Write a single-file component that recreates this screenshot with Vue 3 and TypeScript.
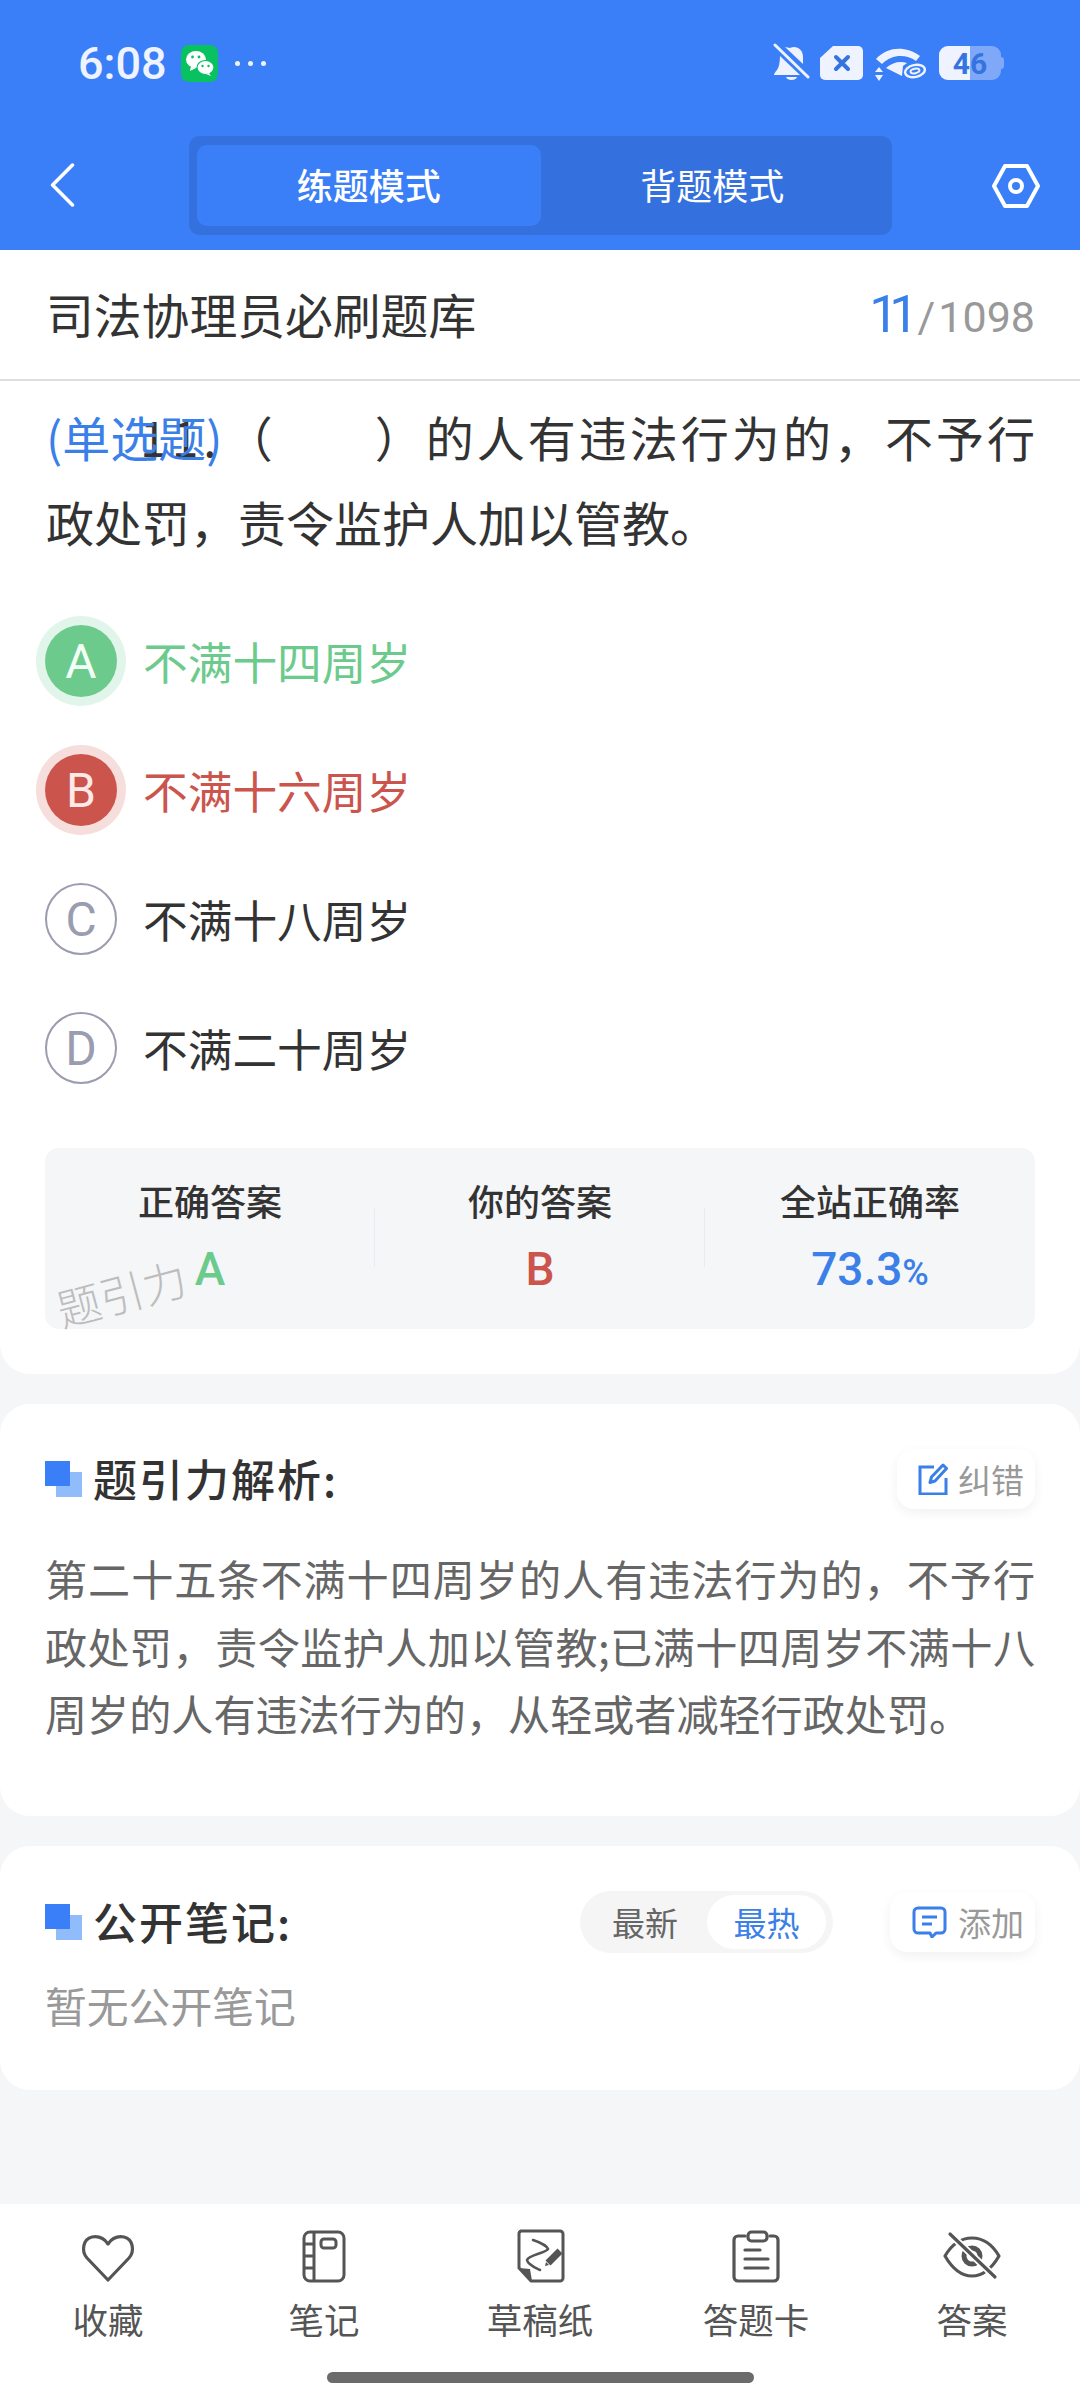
<script setup lang="ts">
interface Option {
  key: string;
  text: string;
  state: 'right' | 'wrong' | 'none';
}

interface Stat {
  label: string;
  value: string;
  unit?: string;
  tone: string;
}

const options: Option[] = [
  { key: 'A', text: '不满十四周岁', state: 'right' },
  { key: 'B', text: '不满十六周岁', state: 'wrong' },
  { key: 'C', text: '不满十八周岁', state: 'none' },
  { key: 'D', text: '不满二十周岁', state: 'none' },
];

const stats: Stat[] = [
  { label: '正确答案', value: 'A', tone: 'right' },
  { label: '你的答案', value: 'B', tone: 'wrong' },
  { label: '全站正确率', value: '73.3', unit: '%', tone: 'blue' },
];

const tabs = ['收藏', '笔记', '草稿纸', '答题卡', '答案'];
</script>

<template>
  <div class="page">
    <header class="head">
      <div class="status">
        <span class="status__time">6:08</span>
        <svg class="status__wechat" viewBox="0 0 37 37" aria-hidden="true">
          <rect width="37" height="37" rx="8" fill="#08c160" />
          <ellipse cx="15" cy="14.500" rx="10" ry="8.500" fill="#fff" />
          <path d="M10 21l-1 5 6-3z" fill="#fff" />
          <ellipse cx="24.500" cy="22.500" rx="8.500" ry="7" fill="#fff" stroke="#08c160" stroke-width="1.200" />
          <path d="M28 28l2 3-5-2z" fill="#fff" />
          <circle cx="11.500" cy="12" r="1.400" fill="#08c160" />
          <circle cx="18" cy="12" r="1.400" fill="#08c160" />
          <circle cx="21.500" cy="21" r="1.200" fill="#08c160" />
          <circle cx="27.500" cy="21" r="1.200" fill="#08c160" />
        </svg>
        <span class="status__dots"><i></i><i></i><i></i></span>
        <span class="status__right">
          <svg class="status__bell" viewBox="0 0 37 40" aria-hidden="true">
            <path d="M17 5c6-3 13 1 13 9v7l-18-17zM7 13l20 19H1c0-1 1-3 3-5 2-3 3-8 3-14z" fill="#eef3ff" />
            <path d="M13 34h11c-1 4-10 4-11 0z" fill="#eef3ff" />
            <path d="M2 2l33 32" stroke="#eef3ff" stroke-width="3" stroke-linecap="round" />
          </svg>
          <svg class="status__sim" viewBox="0 0 43 34" aria-hidden="true">
            <path d="M13 0h25a5 5 0 0 1 5 5v24a5 5 0 0 1-5 5H5a5 5 0 0 1-5-5V12z" fill="#eef3ff" />
            <path d="M16 11l12 12M28 11L16 23" stroke="#3473e0" stroke-width="4" stroke-linecap="round" />
          </svg>
          <svg class="status__wifi" viewBox="0 0 52 36" aria-hidden="true">
            <path d="M2 14C14 1 32 1 46 11l-4 5C32 9 18 9 8 19z" fill="#eef3ff" />
            <path d="M12 23c7-6 14-7 21-5l-4 3-1 10z" fill="#eef3ff" />
            <path d="M5 22l4 5H1zM5 36l4-6H1z" fill="#eef3ff" />
            <ellipse cx="41" cy="26" rx="10" ry="6" fill="none" stroke="#eef3ff" stroke-width="2.400" transform="rotate(-12 41 26)" />
            <ellipse cx="41" cy="26" rx="4.500" ry="2.200" fill="none" stroke="#eef3ff" stroke-width="2" transform="rotate(-12 41 26)" />
          </svg>
          <span class="status__battery">
            <span class="status__level"></span>
            <b>46</b>
          </span>
        </span>
      </div>
      <div class="nav">
        <svg class="nav__back" viewBox="0 0 24 42" aria-hidden="true">
          <path d="M22 2L3 21l19 19" fill="none" stroke="#fff" stroke-width="3.400" stroke-linecap="round" stroke-linejoin="round" />
        </svg>
        <div class="mode">
          <span class="mode__item mode__item--on">练题模式</span>
          <span class="mode__item">背题模式</span>
        </div>
        <svg class="nav__gear" viewBox="0 0 48 44" aria-hidden="true">
          <path d="M13 2h22l11 20-11 20H13L2 22z" fill="none" stroke="#fff" stroke-width="4" stroke-linejoin="round" />
          <circle cx="24" cy="22" r="6" fill="none" stroke="#fff" stroke-width="4" />
        </svg>
      </div>
    </header>

    <main class="body">
      <section class="card card--question">
        <div class="title">
          <span class="title__name">司法协理员必刷题库</span>
          <span class="title__count"><em>11</em><i>/</i>1098</span>
        </div>
        <div class="question">
          <span class="question__type">(单选题)</span>
          <p class="question__text"><span class="question__num">11.</span>（&emsp;&emsp;）的人有违法行为的，不予行政处罚，责令监护人加以管教。</p>
        </div>
        <ul class="options">
          <li v-for="opt in options" :key="opt.key" class="option" :class="`option--${opt.state}`">
            <span class="option__key">{{ opt.key }}</span>
            <span class="option__text">{{ opt.text }}</span>
          </li>
        </ul>
        <div class="stats">
          <div v-for="item in stats" :key="item.label" class="stat">
            <span class="stat__label">{{ item.label }}</span>
            <span class="stat__value" :class="`stat__value--${item.tone}`">{{ item.value }}<small v-if="item.unit">{{ item.unit }}</small></span>
          </div>
          <span class="stats__mark">题引力</span>
        </div>
      </section>

      <section class="card card--analysis">
        <div class="section-head">
          <span class="squares"></span>
          <h2 class="section-head__title">题引力解析:</h2>
          <button type="button" class="chip">
            <svg class="chip__icon" viewBox="0 0 30 32" aria-hidden="true">
              <path d="M16 4H2v27h26V15" fill="none" stroke="#3b7fe8" stroke-width="3" />
              <path d="M25 2l3.500 3.500L17 18l-5 1.500L13.500 14z" fill="none" stroke="#3b7fe8" stroke-width="3" stroke-linejoin="round" />
            </svg>
            <span>纠错</span>
          </button>
        </div>
        <p class="analysis">第二十五条不满十四周岁的人有违法行为的，不予行政处罚，责令监护人加以管教;已满十四周岁不满十八周岁的人有违法行为的，从轻或者减轻行政处罚。</p>
      </section>

      <section class="card card--notes">
        <div class="section-head">
          <span class="squares"></span>
          <h2 class="section-head__title">公开笔记:</h2>
          <div class="sort">
            <span class="sort__item">最新</span>
            <span class="sort__item sort__item--on">最热</span>
          </div>
          <button type="button" class="chip chip--add">
            <svg class="chip__icon chip__icon--note" viewBox="0 0 35 32" aria-hidden="true">
              <path d="M6 2h23a4 4 0 0 1 4 4v17a4 4 0 0 1-4 4h-5l-4 4-2-4H6a4 4 0 0 1-4-4V6a4 4 0 0 1 4-4z" fill="none" stroke="#3b7fe8" stroke-width="3" stroke-linejoin="round" />
              <path d="M10 11h15M10 18h10" stroke="#3b7fe8" stroke-width="3" />
            </svg>
            <span>添加</span>
          </button>
        </div>
        <p class="notes-empty">暂无公开笔记</p>
      </section>
    </main>

    <footer class="tabbar">
      <div v-for="(tab, index) in tabs" :key="tab" class="tab">
        <svg class="tab__icon" viewBox="0 0 60 60" aria-hidden="true">
          <template v-if="index === 0">
            <path d="M30 52L9 30C3 23 5 11 14 9c6-1 12 1 16 7 4-6 10-8 16-7 9 2 11 14 5 21z" fill="none" stroke="#555" stroke-width="3.200" stroke-linejoin="round" />
          </template>
          <template v-else-if="index === 1">
            <rect x="10" y="4" width="40" height="49" rx="6" fill="none" stroke="#555" stroke-width="3" />
            <path d="M20 4v49M10 16h10M10 28h10M10 40h10" fill="none" stroke="#555" stroke-width="3" />
            <rect x="27" y="11" width="15" height="9" rx="3" fill="none" stroke="#555" stroke-width="3" />
          </template>
          <template v-else-if="index === 2">
            <path d="M11 3h39a3 3 0 0 1 3 3v44a3 3 0 0 1-3 3H21L9 40V6a3 3 0 0 1 2-3z" fill="none" stroke="#555" stroke-width="3" stroke-linejoin="round" />
            <path d="M9 40l11 1 2 12z" fill="#555" />
            <path d="M23 12c6 2 14 6 15 9-2 4-20 6-21 11 1 5 9 8 13 10" fill="none" stroke="#555" stroke-width="2.600" stroke-linecap="round" />
            <path d="M50 23L38 35" stroke="#555" stroke-width="7" />
            <path d="M35 38l1-4 3 3z" fill="#555" />
          </template>
          <template v-else-if="index === 3">
            <path d="M19 8h-7a4 4 0 0 0-4 4v37a4 4 0 0 0 4 4h36a4 4 0 0 0 4-4V12a4 4 0 0 0-4-4h-4" fill="none" stroke="#555" stroke-width="3.200" stroke-linecap="round" />
            <rect x="22" y="4" width="19" height="9" rx="3.500" fill="none" stroke="#555" stroke-width="3.200" />
            <path d="M19 22h15M19 31h23M19 40h23" stroke="#555" stroke-width="3.200" stroke-linecap="round" />
          </template>
          <template v-else>
            <path d="M3 28c7-12 16-18 27-18s20 6 27 18c-7 12-16 20-27 20S10 40 3 28z" fill="none" stroke="#555" stroke-width="3.200" stroke-linejoin="round" />
            <circle cx="30" cy="28" r="8" fill="none" stroke="#555" stroke-width="5" />
            <path d="M8 6l45 43" stroke="#fff" stroke-width="7" />
            <path d="M8 6l45 43" stroke="#555" stroke-width="3.200" stroke-linecap="round" />
          </template>
        </svg>
        <span class="tab__label">{{ tab }}</span>
      </div>
      <span class="tabbar__home"></span>
    </footer>
  </div>
</template>

<style>
html,
body {
  margin: 0;
  background: #f5f6f8;
}
</style>

<style scoped>
.page {
  display: flex;
  flex-direction: column;
  width: 1080px;
  height: 2400px;
  overflow: hidden;
  background: #f5f6f8;
  font-family: "Noto Sans CJK SC", "Noto Sans", sans-serif;
  color: #333;
}

.head {
  height: 250px;
  background: #3b7ff8;
}

.status {
  display: flex;
  align-items: center;
  height: 126px;
  margin-bottom: 10px;
  padding: 0 79px 0 78px;
}

.status__time {
  width: 103px;
  font-family: Roboto, sans-serif;
  font-size: 45px;
  font-weight: 500;
  color: #eef3ff;
}

.status__wechat {
  width: 37px;
  height: 37px;
}

.status__dots {
  display: flex;
  gap: 8px;
  margin-left: 17px;
}

.status__dots i {
  width: 5px;
  height: 5px;
  border-radius: 50%;
  background: #eef3ff;
}

.status__right {
  display: flex;
  align-items: center;
  margin-left: auto;
}

.status__bell {
  width: 37px;
  height: 40px;
}

.status__sim {
  width: 43px;
  height: 34px;
  margin-left: 10px;
}

.status__wifi {
  width: 52px;
  height: 36px;
  margin-left: 11px;
}

.status__battery {
  position: relative;
  display: flex;
  align-items: center;
  justify-content: center;
  width: 62px;
  height: 34px;
  margin-left: 13px;
  border-radius: 9px;
  background: #7fa9f8;
}

.status__battery::after {
  content: "";
  position: absolute;
  top: 11px;
  right: -3px;
  width: 3px;
  height: 12px;
  border-radius: 0 3px 3px 0;
  background: #7fa9f8;
}

.status__level {
  position: absolute;
  top: 0;
  bottom: 0;
  left: 0;
  width: 31px;
  border-radius: 9px 0 0 9px;
  background: #eef3ff;
}

.status__battery b {
  position: relative;
  font-family: Roboto, sans-serif;
  font-size: 30px;
  font-weight: 700;
  color: #3473e0;
}

.nav {
  display: flex;
  align-items: center;
  height: 99px;
  padding: 0 40px 0 48px;
}

.nav__back {
  width: 28px;
  height: 44px;
  margin-bottom: 2px;
}

.nav__gear {
  width: 48px;
  height: 44px;
  margin-left: auto;
}

.mode {
  display: flex;
  box-sizing: border-box;
  width: 703px;
  height: 99px;
  margin-left: 113px;
  padding: 9px 8px;
  border-radius: 10px;
  background: #3571de;
}

.mode__item {
  display: flex;
  flex: 1;
  align-items: center;
  justify-content: center;
  padding-bottom: 3px;
  border-radius: 10px;
  font-size: 36px;
  font-weight: 500;
  color: #fff;
}

.mode__item:last-child {
  font-weight: 400;
}

.mode__item--on {
  background: #3b7ff8;
}

.body {
  display: flex;
  flex: 1;
  flex-direction: column;
  gap: 30px;
}

.card {
  box-sizing: border-box;
  border-radius: 30px;
  background: #fff;
}

.card--question {
  height: 1124px;
  border-radius: 0 0 30px 30px;
}

.title {
  display: flex;
  align-items: center;
  justify-content: space-between;
  box-sizing: border-box;
  height: 131px;
  padding: 0 45px 0 46px;
  border-bottom: 2px solid #dedede;
}

.title__name {
  margin-bottom: 3px;
  font-size: 47.800px;
  color: #333;
}

.title__count {
  font-family: Roboto, sans-serif;
  font-size: 43px;
  color: #999;
}

.title__count em {
  font-size: 52px;
  font-style: normal;
  font-weight: 400;
  letter-spacing: -9px;
  color: #3b7fe8;
}

.title__count i {
  margin: 0 3px 0 8px;
  font-style: normal;
}

.question {
  position: relative;
  padding: 13px 45px 0 46px;
}

.question__type {
  position: absolute;
  top: 13px;
  left: 46px;
  font-size: 48px;
  line-height: 85px;
  color: #3b7fe8;
}

.question__text {
  margin: 0;
  font-size: 48px;
  line-height: 85px;
  text-align: justify;
  text-indent: 94px;
  color: #333;
}

.question__num {
  letter-spacing: 5px;
}

.options {
  display: flex;
  flex-direction: column;
  gap: 57px;
  margin: 61px 0 0;
  padding: 0 0 0 45px;
  list-style: none;
}

.option {
  display: flex;
  align-items: center;
  gap: 26px;
  height: 72px;
}

.option__key {
  display: flex;
  align-items: center;
  justify-content: center;
  box-sizing: border-box;
  width: 72px;
  height: 72px;
  border: 2px solid #9a9cb0;
  border-radius: 50%;
  font-family: Roboto, sans-serif;
  font-size: 48px;
  font-weight: 400;
  color: #9a9cb0;
}

.option__text {
  margin-bottom: 2px;
  font-size: 44.700px;
  color: #333;
}

.option--right .option__key {
  border: 0;
  background: #6ccb8c;
  box-shadow: 0 0 0 9px #e2f5ea;
  color: #f2fff6;
}

.option--right .option__text {
  color: #6ccb8c;
}

.option--wrong .option__key {
  border: 0;
  background: #cb544d;
  box-shadow: 0 0 0 9px #f6dedd;
  color: #fde9e8;
}

.option--wrong .option__text {
  color: #cb544d;
}

.stats {
  position: relative;
  display: flex;
  height: 181px;
  margin: 64px 45px 0;
  border-radius: 14px;
  background: #f5f6f8;
}

.stat {
  position: relative;
  display: flex;
  flex: 1;
  flex-direction: column;
  align-items: center;
  padding-top: 31px;
}

.stat + .stat::before {
  content: "";
  position: absolute;
  top: 60px;
  left: -1px;
  width: 1px;
  height: 59px;
  background: #e9ebee;
}

.stat__label {
  font-size: 36px;
  font-weight: 500;
  line-height: 42px;
  color: #333;
}

.stat__value {
  margin-top: 20px;
  font-family: Roboto, sans-serif;
  font-size: 46px;
  font-weight: 500;
  line-height: 56px;
}

.stat__value small {
  font-size: 36px;
}

.stat__value--right {
  color: #6ccb8c;
}

.stat__value--wrong {
  color: #cb544d;
}

.stat__value--blue {
  color: #3b7fe8;
}

.stats__mark {
  position: absolute;
  top: 116px;
  left: 10px;
  font-size: 44px;
  font-weight: 300;
  line-height: 56px;
  color: #bdbdbd;
  transform: rotate(-15deg);
}

.card--analysis {
  height: 412px;
  padding: 45px 45px 0;
}

.card--notes {
  height: 244px;
  padding: 46px 45px 0;
}

.section-head {
  display: flex;
  align-items: center;
  height: 60px;
}

.squares {
  position: relative;
  flex-shrink: 0;
  width: 37px;
  height: 36px;
  background: linear-gradient(#3b7ff8, #3b7ff8) left top / 25px 25px no-repeat,
    linear-gradient(#90bcfb, #90bcfb) right bottom / 26px 25px no-repeat;
}

.section-head__title {
  margin: 0 0 3px 11px;
  font-size: 44px;
  font-weight: 500;
  letter-spacing: 2px;
  color: #333;
}

.chip {
  display: flex;
  align-items: center;
  gap: 10px;
  height: 60px;
  margin-left: auto;
  padding: 0 11px 0 21px;
  border: 0;
  border-radius: 17px;
  background: #fff;
  box-shadow: 0 4px 12px rgba(0, 0, 0, 0.06);
  font-family: inherit;
  font-size: 33px;
  color: #999;
}

.chip__icon {
  width: 30px;
  height: 32px;
}

.chip__icon--note {
  width: 35px;
}

.chip--add {
  margin-left: 57px;
  padding-left: 22px;
  gap: 11px;
}

.sort {
  display: flex;
  align-items: center;
  justify-content: space-between;
  box-sizing: border-box;
  width: 253px;
  height: 62px;
  margin-left: auto;
  padding: 0 7px 0 32px;
  border-radius: 31px;
  background: #f5f5f5;
}

.sort__item {
  font-size: 33px;
  color: #666;
}

.sort__item--on {
  display: flex;
  align-items: center;
  justify-content: center;
  width: 119px;
  height: 54px;
  border-radius: 27px;
  background: #fff;
  color: #3b7fe8;
}

.analysis {
  margin: 35px 0 0;
  font-size: 42.100px;
  line-height: 67.500px;
  text-align: justify;
  color: #666;
}

.notes-empty {
  margin: 25px 0 0;
  font-size: 41.800px;
  line-height: 56px;
  color: #999;
}

.tabbar {
  position: relative;
  display: flex;
  height: 196px;
  background: #fff;
}

.tab {
  display: flex;
  flex: 1;
  flex-direction: column;
  align-items: center;
  padding-top: 24px;
}

.tab__icon {
  width: 60px;
  height: 60px;
}

.tab__label {
  margin-top: 8px;
  font-size: 35.500px;
  line-height: 46px;
  color: #555;
}

.tabbar__home {
  position: absolute;
  bottom: 17px;
  left: 327px;
  width: 427px;
  height: 11px;
  border-radius: 6px;
  background: #6b6b6b;
}
</style>
